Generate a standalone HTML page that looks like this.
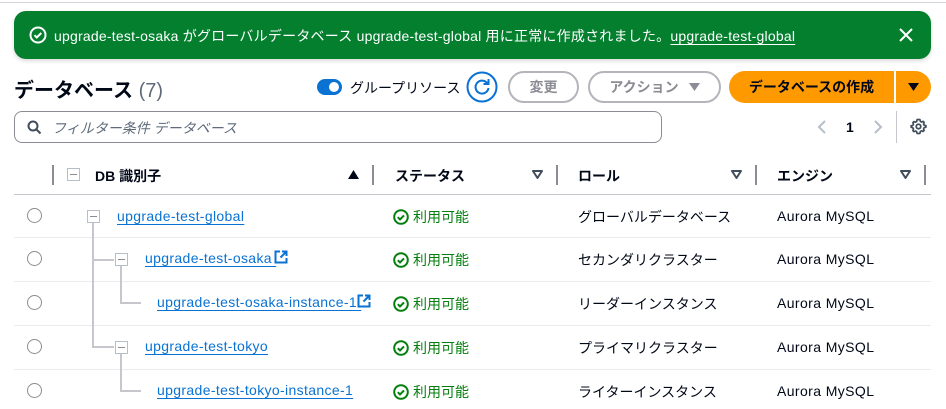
<!DOCTYPE html>
<html><head><meta charset="utf-8"><style>
*{margin:0;padding:0;box-sizing:border-box}
body{width:946px;height:409px;background:#fff;font-family:"Liberation Sans","Noto Sans CJK JP",sans-serif;font-size:14px;color:#000716;position:relative;overflow:hidden}
.a{position:absolute;white-space:nowrap}
.lk{color:#0972d3;text-decoration:underline;text-underline-offset:3px;letter-spacing:0.35px}
.hdr{font-weight:bold;color:#000716;font-size:14px}
.sep{position:absolute;width:2px;height:20px;background:#8c8c94;top:165px}
.rl{position:absolute;left:14px;width:917px;height:1px;background:#e9ebed}
.radio{position:absolute;left:27px;width:15px;height:15px;border:1.5px solid #8c8c94;border-radius:50%}
.box{position:absolute;width:13px;height:13px;border:1.5px solid #b6bec9;background:#fff}
.box::after{content:"";position:absolute;left:2px;right:2px;top:4.5px;height:1.5px;background:#8c8c94}
.tl{position:absolute;background:#c6c6cd}
.st{position:absolute;left:393px;color:#037f0c;display:flex;align-items:center;gap:4px}
.btn{position:absolute;border:2px solid #b4b4bb;border-radius:20px;color:#8c8c94;font-weight:bold;display:flex;align-items:center;justify-content:center;height:32px;top:71px}
.tri{position:absolute;top:170px}
.eng{letter-spacing:0.4px}
</style></head><body>
<div class="a" style="left:0;top:2px;width:946px;height:1px;background:#d1d5db"></div>
<div class="a" style="left:14px;top:11px;width:917px;height:48px;background:#037f2e;border-radius:12px;box-shadow:0 2px 4px rgba(0,0,0,.15)"></div>
<svg class="a" style="left:29px;top:26px" width="18" height="18" viewBox="0 0 18 18"><circle cx="9" cy="9" r="7.5" fill="none" stroke="#fff" stroke-width="2"/><path d="M5.5 9.2l2.3 2.3 4.5-4.5" fill="none" stroke="#fff" stroke-width="2"/></svg>
<div class="a" style="left:54px;top:26px;color:#fff;font-size:14px;letter-spacing:0.22px">upgrade-test-osaka がグローバルデータベース upgrade-test-global 用に正常に作成されました。<span style="text-decoration:underline;text-underline-offset:3px">upgrade-test-global</span></div>
<svg class="a" style="left:899px;top:28px" width="14" height="14" viewBox="0 0 14 14"><path d="M1 1l12 12M13 1L1 13" stroke="#fff" stroke-width="2"/></svg>

<div class="a" style="left:14px;top:74px;font-size:20px;font-weight:bold">データベース <span style="font-weight:normal;color:#5f6b7a">(7)</span></div>
<div class="a" style="left:317px;top:79px;width:25px;height:16px;background:#0972d3;border-radius:8px"><div style="position:absolute;right:3px;top:3px;width:10px;height:10px;background:#fff;border-radius:50%"></div></div>
<div class="a" style="left:350px;top:78px;font-size:14px">グループリソース</div>
<svg class="a" style="left:466px;top:71px" width="32" height="32" viewBox="0 0 32 32"><circle cx="16" cy="16" r="14.5" fill="#fff" stroke="#0972d3" stroke-width="2"/><path d="M21.5 12.5A6.5 6.5 0 1 0 22.5 17" fill="none" stroke="#0972d3" stroke-width="2"/><path d="M22.5 8v5h-5" fill="none" stroke="#0972d3" stroke-width="2"/></svg>
<div class="btn" style="left:508px;width:71px">変更</div>
<div class="btn" style="left:588px;width:133px">アクション <svg style="margin-left:10px" width="11" height="8" viewBox="0 0 11 8"><path d="M0 0h11L5.5 8z" fill="#8c8c94"/></svg></div>
<div class="a" style="left:729px;top:71px;width:165px;height:32px;background:#ff9900;border-radius:16px 0 0 16px;font-weight:bold;display:flex;align-items:center;justify-content:center">データベースの作成</div>
<div class="a" style="left:896px;top:71px;width:35px;height:32px;background:#ff9900;border-radius:0 16px 16px 0;display:flex;align-items:center;justify-content:center"><svg width="11" height="8" viewBox="0 0 11 8"><path d="M0 0h11L5.5 8z" fill="#000716"/></svg></div>

<div class="a" style="left:14px;top:111px;width:648px;height:32px;border:1px solid #8c8c94;border-radius:8px"></div>
<svg class="a" style="left:27px;top:120px" width="15" height="15" viewBox="0 0 15 15"><circle cx="6" cy="6" r="4.5" fill="none" stroke="#414d5c" stroke-width="2"/><path d="M9.5 9.5l4 4" stroke="#414d5c" stroke-width="2"/></svg>
<div class="a" style="left:52px;top:118px;color:#5f6b7a;font-style:italic">フィルター条件 データベース</div>
<svg class="a" style="left:817px;top:120px" width="10" height="14" viewBox="0 0 10 14"><path d="M8 1L2 7l6 6" fill="none" stroke="#b6bec9" stroke-width="2"/></svg>
<div class="a" style="left:846px;top:119px;font-weight:bold">1</div>
<svg class="a" style="left:873px;top:120px" width="10" height="14" viewBox="0 0 10 14"><path d="M2 1l6 6-6 6" fill="none" stroke="#b6bec9" stroke-width="2"/></svg>
<div class="a" style="left:896px;top:111px;width:1px;height:32px;background:#c6c6cd"></div>
<svg class="a" style="left:910px;top:118px" width="17" height="17" viewBox="0 0 24 24"><path d="M12 2l2 .3.6 2.4 1.6.9 2.3-.8 1.4 1.4-.8 2.3.9 1.6 2.4.6V13l-2.4.6-.9 1.6.8 2.3-1.4 1.4-2.3-.8-1.6.9L14 21.7 12 22l-2-.3-.6-2.4-1.6-.9-2.3.8-1.4-1.4.8-2.3-.9-1.6L1.6 13V11l2.4-.6.9-1.6-.8-2.3 1.4-1.4 2.3.8 1.6-.9L10 2.3z" fill="none" stroke="#414d5c" stroke-width="2.4" stroke-linejoin="round"/><circle cx="12" cy="12" r="3.2" fill="none" stroke="#414d5c" stroke-width="2.4"/></svg>

<div class="sep" style="left:52px"></div><div class="sep" style="left:372px"></div><div class="sep" style="left:556px"></div><div class="sep" style="left:755px"></div><div class="sep" style="left:924px"></div>
<div class="box" style="left:67px;top:168px"></div>
<div class="a hdr" style="left:95px;top:166px">DB 識別子</div>
<svg class="tri" style="left:348px" width="11" height="9" viewBox="0 0 11 9"><path d="M0 9h11L5.5 0z" fill="#000716"/></svg>
<div class="a hdr" style="left:395px;top:166px">ステータス</div>
<svg class="tri" style="left:532px" width="11" height="9" viewBox="0 0 11 9"><path d="M1 1h9L5.5 8z" fill="none" stroke="#414d5c" stroke-width="2" stroke-linejoin="round"/></svg>
<div class="a hdr" style="left:578px;top:166px">ロール</div>
<svg class="tri" style="left:731px" width="11" height="9" viewBox="0 0 11 9"><path d="M1 1h9L5.5 8z" fill="none" stroke="#414d5c" stroke-width="2" stroke-linejoin="round"/></svg>
<div class="a hdr" style="left:777px;top:166px">エンジン</div>
<svg class="tri" style="left:900px" width="11" height="9" viewBox="0 0 11 9"><path d="M1 1h9L5.5 8z" fill="none" stroke="#414d5c" stroke-width="2" stroke-linejoin="round"/></svg>
<div class="a" style="left:14px;top:194px;width:917px;height:1px;background:#c6c6cd"></div>

<div class="rl" style="top:237px"></div><div class="rl" style="top:281px"></div><div class="rl" style="top:325px"></div><div class="rl" style="top:369px"></div>

<div class="tl" style="left:92px;top:222px;width:1.5px;height:125px"></div>
<div class="tl" style="left:92px;top:259px;width:22px;height:1.5px"></div>
<div class="tl" style="left:92px;top:346px;width:22px;height:1.5px"></div>
<div class="tl" style="left:120px;top:266px;width:1.5px;height:37px"></div>
<div class="tl" style="left:120px;top:302px;width:21px;height:1.5px"></div>
<div class="tl" style="left:120px;top:353px;width:1.5px;height:38px"></div>
<div class="tl" style="left:120px;top:390px;width:21px;height:1.5px"></div>
<div class="box" style="left:87px;top:210px"></div>
<div class="box" style="left:115px;top:253px"></div>
<div class="box" style="left:115px;top:341px"></div>

<div class="radio" style="top:208px"></div><div class="radio" style="top:251px"></div><div class="radio" style="top:295px"></div><div class="radio" style="top:339px"></div><div class="radio" style="top:383px"></div>

<div class="a lk" style="left:117px;top:208px">upgrade-test-global</div>
<div class="a lk" style="left:145px;top:250px">upgrade-test-osaka&nbsp;</div>
<div class="a lk" style="left:157px;top:294px">upgrade-test-osaka-instance-1&nbsp;</div>
<div class="a lk" style="left:145px;top:338px">upgrade-test-tokyo</div>
<div class="a lk" style="left:157px;top:382px">upgrade-test-tokyo-instance-1</div>
<svg class="a" style="left:274px;top:250px" width="14" height="14" viewBox="0 0 14 14"><path d="M6 1.5H1.5v11h11V8M8 1.5h4.5V6M12.5 1.5L6.5 7.5" fill="none" stroke="#0972d3" stroke-width="2"/></svg>
<svg class="a" style="left:357px;top:294px" width="14" height="14" viewBox="0 0 14 14"><path d="M6 1.5H1.5v11h11V8M8 1.5h4.5V6M12.5 1.5L6.5 7.5" fill="none" stroke="#0972d3" stroke-width="2"/></svg>

<div class="st" style="top:207px"><svg width="16" height="16" viewBox="0 0 16 16"><circle cx="8" cy="8" r="6.8" fill="none" stroke="#037f0c" stroke-width="2"/><path d="M4.8 8.2l2.2 2.2 4-4" fill="none" stroke="#037f0c" stroke-width="2"/></svg>利用可能</div>
<div class="st" style="top:250px"><svg width="16" height="16" viewBox="0 0 16 16"><circle cx="8" cy="8" r="6.8" fill="none" stroke="#037f0c" stroke-width="2"/><path d="M4.8 8.2l2.2 2.2 4-4" fill="none" stroke="#037f0c" stroke-width="2"/></svg>利用可能</div>
<div class="st" style="top:294px"><svg width="16" height="16" viewBox="0 0 16 16"><circle cx="8" cy="8" r="6.8" fill="none" stroke="#037f0c" stroke-width="2"/><path d="M4.8 8.2l2.2 2.2 4-4" fill="none" stroke="#037f0c" stroke-width="2"/></svg>利用可能</div>
<div class="st" style="top:338px"><svg width="16" height="16" viewBox="0 0 16 16"><circle cx="8" cy="8" r="6.8" fill="none" stroke="#037f0c" stroke-width="2"/><path d="M4.8 8.2l2.2 2.2 4-4" fill="none" stroke="#037f0c" stroke-width="2"/></svg>利用可能</div>
<div class="st" style="top:382px"><svg width="16" height="16" viewBox="0 0 16 16"><circle cx="8" cy="8" r="6.8" fill="none" stroke="#037f0c" stroke-width="2"/><path d="M4.8 8.2l2.2 2.2 4-4" fill="none" stroke="#037f0c" stroke-width="2"/></svg>利用可能</div>

<div class="a" style="left:578px;top:207px">グローバルデータベース</div>
<div class="a" style="left:578px;top:250px">セカンダリクラスター</div>
<div class="a" style="left:578px;top:294px">リーダーインスタンス</div>
<div class="a" style="left:578px;top:338px">プライマリクラスター</div>
<div class="a" style="left:578px;top:382px">ライターインスタンス</div>
<div class="a eng" style="left:777px;top:208px">Aurora MySQL</div>
<div class="a eng" style="left:777px;top:251px">Aurora MySQL</div>
<div class="a eng" style="left:777px;top:295px">Aurora MySQL</div>
<div class="a eng" style="left:777px;top:339px">Aurora MySQL</div>
<div class="a eng" style="left:777px;top:383px">Aurora MySQL</div>
</body></html>
